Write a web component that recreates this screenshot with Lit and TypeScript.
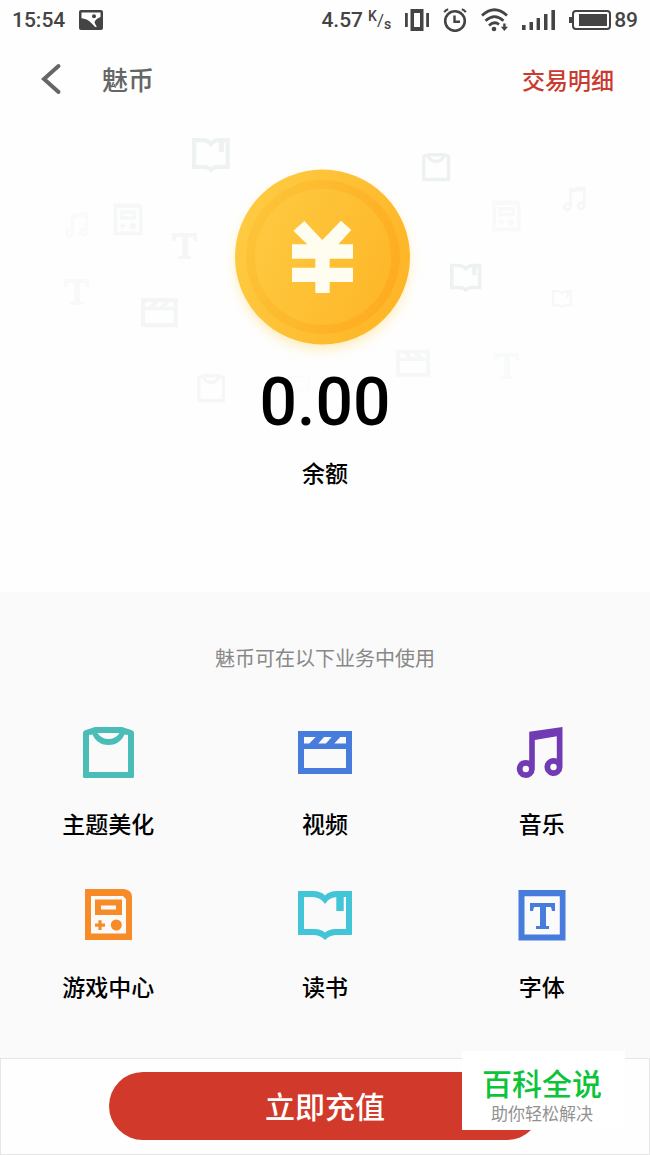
import { LitElement, html, svg, css } from "lit";
import { customElement, property } from "lit/decorators.js";

type GlyphName = "theme" | "video" | "music" | "game" | "book" | "font" | "letter";

const LETTER =
  "M15 15H40V23H37L36 19H31V38H34V41H21V38H25V19H19L18 23H15Z";

/* Each glyph is drawn in a 54 x 54 box and takes the current colour. */
const GLYPHS: Record<GlyphName, unknown> = {
  theme: svg`<path fill-rule="evenodd" d="M14 2H41L51 5.2Q53 6 53 8V51.5Q53 53 51.5 53H3.500Q2 53 2 51.500V8Q2 6 4 5.200Z
    M8 10V47H47V10L43.500 9.500C40.500 17 34 20 27.500 20S14.500 17 11.500 9.500Z M16.500 8C19 12 23 14 27.500 14S36 12 38.500 8Z"/>`,
  video: svg`<path fill-rule="evenodd" d="M0 6H54V49H0Z M6 24V43H48V24Z
    M6 12V18.600H11.300L17.700 12Z M26 12L20.300 18.600H28L33.700 12Z M42.300 12L36.300 18.600H48V12Z"/>`,
  music: svg`<path fill-rule="evenodd" d="M14.200 6.700L47.500 2V42A9 9 0 1 1 41.800 33.600V11.300L19.800 15V44A9 9 0 1 1 14.200 35.600Z
    M10.800 40.800A3.200 3.200 0 1 0 10.800 47.200A3.200 3.200 0 1 0 10.800 40.800Z
    M38.500 38.800A3.200 3.200 0 1 0 38.500 45.200A3.200 3.200 0 1 0 38.500 38.800Z"/>`,
  game: svg`<path fill-rule="evenodd" d="M4 1H43Q51 2 51 9V52H4Z M10 8V45.500H45V11L42 8Z"/>
    <path fill-rule="evenodd" d="M14 11.500H41V27H14Z M20 17.500V21.500H35V17.500Z"/>
    <path d="M17.400 32.200H20.600V35.600H24V38.800H20.600V42H17.400V38.800H14V35.600H17.400Z"/>
    <circle cx="35.300" cy="37" r="5.500"/>`,
  book: svg`<path fill-rule="evenodd" d="M0 3H15Q23 3 27 7.500Q31 3 39 3H54V47H38Q31 47.500 27 52Q23 47.500 16 47H0Z
    M6 9V41H17Q23 41 27 44.500Q31 41 37 41H48V9H45.700V23H38.300V9Q31 9.500 27 16Q23 9.500 15 9Z"/>`,
  font: svg`<path fill-rule="evenodd" d="M3.500 2H50.500V52.600H3.500Z M9.500 8.300V46.600H44.800V8.300Z"/><path d=${LETTER}/>`,
  letter: svg`<path d=${LETTER}/>`,
};

interface Drift {
  glyph: GlyphName;
  x: number;
  y: number;
  scale: number;
  color: string;
  flip?: boolean;
}

const DRIFTS: Drift[] = [
  { glyph: "book", x: 192, y: 136, scale: 0.7, color: "#eff2f2" },
  { glyph: "theme", x: 421, y: 152, scale: 0.55, color: "#eef1f1" },
  { glyph: "book", x: 450, y: 262, scale: 0.58, color: "#eef1f1" },
  { glyph: "video", x: 141, y: 294, scale: 0.68, color: "#f4f6f6" },
  { glyph: "video", x: 430, y: 346, scale: 0.63, color: "#f6f8f8", flip: true },
  { glyph: "theme", x: 196, y: 373, scale: 0.55, color: "#f5f7f7" },
  { glyph: "game", x: 111, y: 203, scale: 0.62, color: "#f6f8f8" },
  { glyph: "game", x: 490, y: 200, scale: 0.6, color: "#f8f9f9" },
  { glyph: "music", x: 562, y: 185, scale: 0.5, color: "#f6f7f7" },
  { glyph: "music", x: 64, y: 211, scale: 0.5, color: "#fafafa" },
  { glyph: "letter", x: 157, y: 218, scale: 1, color: "#f5f6f6" },
  { glyph: "letter", x: 49, y: 264, scale: 1, color: "#f9f9f9" },
  { glyph: "letter", x: 479, y: 338, scale: 1, color: "#f9fbfb" },
  { glyph: "book", x: 552, y: 289, scale: 0.37, color: "#f6f7f7" },
  { glyph: "video", x: 290, y: 373, scale: 0.37, color: "#fcfcfc" },
];

interface Service {
  glyph: GlyphName;
  label: string;
  tone: string;
}

const SERVICES: Service[] = [
  { glyph: "theme", label: "主题美化", tone: "teal" },
  { glyph: "video", label: "视频", tone: "blue" },
  { glyph: "music", label: "音乐", tone: "purple" },
  { glyph: "game", label: "游戏中心", tone: "orange" },
  { glyph: "book", label: "读书", tone: "cyan" },
  { glyph: "font", label: "字体", tone: "blue" },
];

@customElement("status-bar")
class StatusBar extends LitElement {
  static styles = css`
    :host {
      display: flex;
      align-items: center;
      justify-content: space-between;
      height: 40px;
      padding: 0 12px;
      color: #444;
      font: 500 21px/24px Roboto, "Noto Sans CJK SC", sans-serif;
    }
    .side {
      display: flex;
      align-items: center;
      gap: 14px;
    }
    .rate {
      display: flex;
      gap: 5px;
    }
    .unit {
      display: flex;
      font-size: 14px;
      line-height: 24px;
    }
    .per {
      line-height: 16px;
    }
    .slash {
      font-size: 17px;
      font-weight: 400;
    }
    .second {
      align-self: flex-end;
      line-height: 16px;
    }
    .power {
      display: flex;
      align-items: center;
      gap: 3px;
    }
    svg {
      display: block;
      fill: currentColor;
    }
    .line {
      fill: none;
      stroke: currentColor;
    }
    .hole {
      fill: #fff;
    }
  `;

  render() {
    return html`
      <div class="side">
        <span>15:54</span>
        <svg width="24" height="20" viewBox="0 0 24 20" aria-hidden="true">
          <rect width="24" height="20" rx="2" />
          <path class="hole" d="M2.500 2.500H21.500V7C18.500 8 16 10 15.500 12.500L17.800 17H16.200L12.500 13.200C9.500 10 6 8.600 2.500 8.300Z" />
          <circle cx="15" cy="6.200" r="2" />
        </svg>
      </div>
      <div class="side">
        <span class="rate">
          <span>4.57</span>
          <span class="unit"><span class="per">K</span><span class="slash">/</span><span class="second">s</span></span>
        </span>
        <svg width="24" height="22" viewBox="0 0 24 22" aria-hidden="true">
          <path fill-rule="evenodd" d="M5.500 0H18.500V22H5.500Z M9 4V18H15V4Z M0 4H2.800V18H0Z M21.200 4H24V18H21.200Z" />
        </svg>
        <svg width="24" height="24" viewBox="0 0 24 24" aria-hidden="true">
          <circle class="line" cx="12" cy="13" r="9.800" stroke-width="2.600" />
          <path class="line" d="M11.500 7.500V13.800H17" stroke-width="2.400" />
          <path class="line" d="M1.200 4.200Q2.500 1.800 5.200 1.200M22.800 4.200Q21.500 1.800 18.800 1.200" stroke-width="2" />
        </svg>
        <svg width="27" height="24" viewBox="0 0 27 24" aria-hidden="true">
          <path class="line" d="M1 7.500Q13.500 -4 26 7.500M4.500 12.800Q13.500 4.500 22.500 12.800M8 17.500Q13.500 12.500 18 16.500" stroke-width="2.700" />
          <circle cx="13" cy="21" r="2.300" />
          <path d="M22.200 15.500H24.600V18.800H27L23.400 23L19.800 18.800H22.200Z" />
        </svg>
        <svg width="33" height="20" viewBox="0 0 33 20" aria-hidden="true">
          <path d="M0 15H3.600V20H0ZM7.500 12H11V20H7.500ZM14.600 8H18V20H14.600ZM22 4H25.500V20H22ZM29.400 0H33V20H29.400Z" />
        </svg>
        <span class="power">
          <svg width="42" height="20" viewBox="0 0 42 20" aria-hidden="true">
            <path d="M0 7H3V13H0Z" />
            <rect class="line" x="4" y="1" width="37" height="18" rx="3" stroke-width="2" />
            <rect x="10" y="4" width="28" height="12" />
          </svg>
          <span>89</span>
        </span>
      </div>
    `;
  }
}

@customElement("coin-art")
class CoinArt extends LitElement {
  static styles = css`
    :host {
      display: block;
    }
    svg {
      display: block;
      width: 100%;
      height: 300px;
    }
  `;

  render() {
    return html`
      <svg viewBox="0 120 650 300" aria-hidden="true">
        <defs>
          <linearGradient id="face" x1="0" y1="0.300" x2="1" y2="0.700">
            <stop offset="0" stop-color="#fecb42" />
            <stop offset="1" stop-color="#feb526" />
          </linearGradient>
          <linearGradient id="ring" x1="0" y1="0.300" x2="1" y2="0.700">
            <stop offset="0" stop-color="#fdc337" />
            <stop offset="1" stop-color="#feac20" />
          </linearGradient>
          <filter id="glow" x="-20%" y="-20%" width="140%" height="140%">
            <feGaussianBlur stdDeviation="7" />
          </filter>
        </defs>
        ${DRIFTS.map(
          (d) => svg`<g fill=${d.color}
            transform="translate(${d.x} ${d.y}) scale(${d.flip ? -d.scale : d.scale} ${d.scale})">${GLYPHS[d.glyph]}</g>`
        )}
        <circle cx="322.500" cy="263" r="85" fill="#ffd768" opacity="0.550" filter="url(#glow)" />
        <circle cx="322.500" cy="257" r="87.500" fill="url(#face)" />
        <circle cx="323" cy="257" r="72.500" fill="none" stroke="url(#ring)" stroke-width="9" />
        <path
          fill="#fffdf0"
          transform="translate(220 150) scale(0.3333)"
          d="M253 213L307 270L363 212L394 240L355 283H399V326H329V353H399V396H329V429H286V396H216V353H286V326H216V283H262L220 242Z"
        />
      </svg>
    `;
  }
}

@customElement("service-tile")
class ServiceTile extends LitElement {
  @property() glyph: GlyphName = "theme";
  @property() label = "";
  @property() tone = "teal";

  static styles = css`
    :host {
      display: block;
    }
    .tile {
      display: flex;
      flex-direction: column;
      align-items: center;
      gap: 30px;
      color: #000;
      font-size: 23px;
      font-weight: 500;
      line-height: 28px;
      text-decoration: none;
    }
    svg {
      display: block;
      width: 54px;
      height: 54px;
      fill: currentColor;
    }
    .teal { color: #4bbdb7; }
    .blue { color: #477bdc; }
    .purple { color: #703bb3; }
    .orange { color: #f78b28; }
    .cyan { color: #41c5d7; }
  `;

  render() {
    return html`
      <a class="tile" href="#">
        <svg class=${this.tone} viewBox="0 0 54 54" aria-hidden="true">${GLYPHS[this.glyph]}</svg>
        <span>${this.label}</span>
      </a>
    `;
  }
}

@customElement("app-root")
class AppRoot extends LitElement {
  static styles = css`
    :host {
      display: flex;
      flex-direction: column;
      min-height: 100vh;
      position: relative;
      background: #fefefe;
      color: #000;
      font-family: "Noto Sans CJK SC", sans-serif;
    }
    .header {
      display: flex;
      align-items: center;
      height: 78px;
      padding: 0 36px 2px 40px;
    }
    .back {
      display: flex;
      padding: 0;
      border: 0;
      background: none;
      color: #666;
    }
    .back svg {
      display: block;
      fill: none;
      stroke: currentColor;
      stroke-width: 4;
      stroke-linecap: round;
    }
    .title {
      flex: 1;
      margin: 0 0 0 40px;
      color: #666;
      font-size: 26px;
      font-weight: 500;
      line-height: 32px;
    }
    .history {
      color: #c93a30;
      font-size: 23px;
      font-weight: 500;
      line-height: 28px;
      text-decoration: none;
    }
    .hero {
      display: grid;
      height: 472px;
    }
    .art,
    .balance {
      grid-area: 1 / 1;
    }
    .balance {
      display: flex;
      flex-direction: column;
      align-items: center;
      gap: 15px;
      padding-top: 243px;
      z-index: 1;
    }
    .amount {
      font: 500 66px/80px Roboto, sans-serif;
    }
    .caption {
      font-size: 23px;
      font-weight: 500;
      line-height: 28px;
    }
    .services {
      flex: 1;
      padding: 52px 0 56px;
      background: #fafafa;
    }
    .hint {
      margin: 0 0 53px;
      color: #888;
      font-size: 20px;
      font-weight: 400;
      line-height: 28px;
      text-align: center;
    }
    .grid {
      display: grid;
      grid-template-columns: repeat(3, 1fr);
      row-gap: 51px;
    }
    .footer {
      display: flex;
      justify-content: center;
      padding: 13px 0 14px;
      border: 1px solid #e6e6e6;
      background: #fefefe;
    }
    .recharge {
      width: 66.666%;
      height: 68px;
      padding: 0 0 2px;
      border: 0;
      border-radius: 34px;
      background: #d13a2a;
      color: #fff;
      font: 500 30px/36px "Noto Sans CJK SC", sans-serif;
    }
    .mark {
      position: absolute;
      right: 25px;
      bottom: 25px;
      display: flex;
      flex-direction: column;
      align-items: center;
      gap: 1px;
      box-sizing: border-box;
      width: 163px;
      height: 79px;
      padding: 16px 3px 0 0;
      background: #fff;
      font-family: Roboto, "Noto Sans CJK SC", sans-serif;
    }
    .brand {
      color: #0cc43a;
      font-size: 30px;
      font-weight: 500;
      line-height: 36px;
    }
    .slogan {
      color: #929292;
      font-size: 17px;
      font-weight: 400;
      line-height: 20px;
    }
  `;

  render() {
    return html`
      <status-bar></status-bar>
      <header class="header">
        <button class="back" type="button" aria-label="返回">
          <svg width="22" height="32" viewBox="0 0 22 32" aria-hidden="true"><path d="M18.500 3L4 16L18.500 29" /></svg>
        </button>
        <h1 class="title">魅币</h1>
        <a class="history" href="#">交易明细</a>
      </header>
      <section class="hero">
        <coin-art class="art"></coin-art>
        <div class="balance">
          <span class="amount">0.00</span>
          <span class="caption">余额</span>
        </div>
      </section>
      <section class="services">
        <h2 class="hint">魅币可在以下业务中使用</h2>
        <div class="grid">
          ${SERVICES.map(
            (s) => html`<service-tile .glyph=${s.glyph} .label=${s.label} .tone=${s.tone}></service-tile>`
          )}
        </div>
      </section>
      <footer class="footer">
        <button class="recharge" type="button">立即充值</button>
      </footer>
      <aside class="mark">
        <span class="brand">百科全说</span>
        <span class="slogan">助你轻松解决</span>
      </aside>
    `;
  }
}
